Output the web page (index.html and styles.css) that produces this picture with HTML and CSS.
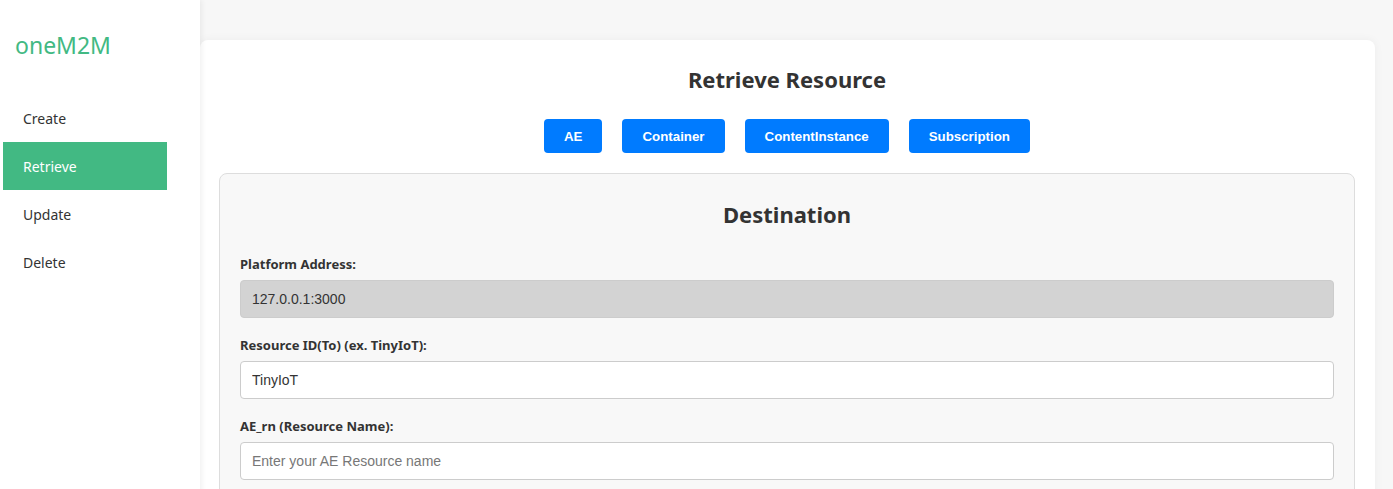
FILE: index.html
```html
<!DOCTYPE html>
<html>
<head>
<meta charset="utf-8">
<link rel="stylesheet" href="styles.css">
</head>
<body>
<div class="app">
  <aside class="sidebar">
    <div class="logo">oneM2M</div>
    <nav class="menu">
      <div class="menu-item">Create</div>
      <div class="menu-item active">Retrieve</div>
      <div class="menu-item">Update</div>
      <div class="menu-item">Delete</div>
    </nav>
  </aside>
  <main class="main">
    <section class="card">
      <h2 class="title">Retrieve Resource</h2>
      <div class="tabs">
        <button class="tab">AE</button>
        <button class="tab">Container</button>
        <button class="tab">ContentInstance</button>
        <button class="tab">Subscription</button>
      </div>
      <div class="form-box">
        <h3 class="form-title">Destination</h3>
        <label class="label">Platform Address:</label>
        <input class="input disabled" type="text" value="127.0.0.1:3000" disabled>
        <label class="label">Resource ID(To) (ex. TinyIoT):</label>
        <input class="input" type="text" value="TinyIoT">
        <label class="label">AE_rn (Resource Name):</label>
        <input class="input" type="text" placeholder="Enter your AE Resource name">
      </div>
    </section>
  </main>
</div>
</body>
</html>
```

FILE: styles.css
```css
* { box-sizing: border-box; }
html, body { margin: 0; padding: 0; }
body {
  font-family: "Noto Sans", "Open Sans", sans-serif;
  background: #f7f7f7;
  color: #2c3e50;
  height: 489px;
  overflow: hidden;
}
.app { display: flex; min-height: 489px; }
.sidebar {
  width: 200px;
  flex-shrink: 0;
  background: #fff;
  box-shadow: 2px 0 5px rgba(0,0,0,0.06);
  padding: 0 33px 0 3px;
  position: relative;
  z-index: 1;
}
.logo {
  color: #42b983;
  font-size: 23px;
  line-height: 30px;
  padding: 30px 0 0 12px;
  height: 94px;
}
.menu { display: flex; flex-direction: column; }
.menu-item {
  height: 48px;
  line-height: 47px;
  padding: 1px 0 0 20px;
  font-size: 14px;
  color: #333;
}
.menu-item.active { background: #42b983; color: #fff; }
.main { flex: 1; padding: 40px 18px 0 0; }
.card {
  background: #fff;
  border-radius: 8px;
  box-shadow: 0 0 10px rgba(0,0,0,0.05);
  padding: 20px 20px 20px 19px;
}
.title {
  margin: 5px 0 0;
  text-align: center;
  font-size: 22px;
  line-height: 29px;
  color: #333;
  font-weight: 700;
}
.tabs {
  display: flex;
  justify-content: center;
  gap: 20px;
  margin-top: 25px;
}
.tab {
  height: 34px;
  padding: 0 20px;
  border: none;
  border-radius: 4px;
  background: #007bff;
  color: #fff;
  font-family: "Liberation Sans", Arial, sans-serif;
  font-weight: 700;
  font-size: 13.3px;
}
.form-box {
  margin-top: 20px;
  background: #f8f8f8;
  border: 1px solid #ddd;
  border-radius: 8px;
  padding: 20px 20px 20px 20px;
}
.form-title {
  margin: 7px 0 29px;
  text-align: center;
  font-size: 22px;
  line-height: 26px;
  color: #333;
  font-weight: 700;
}
.label {
  display: block;
  font-size: 13px;
  line-height: 17px;
  font-weight: 700;
  color: #333;
  margin-bottom: 7px;
}
.input {
  display: block;
  width: 100%;
  height: 38px;
  margin: 0 0 19px;
  padding: 0 11px;
  border: 1px solid #ccc;
  border-radius: 4px;
  background: #fff;
  font-family: "Liberation Sans", Arial, sans-serif;
  font-size: 14px;
  color: #333;
}
.input + .label { margin-top: 0; }
.input::placeholder { color: #777; }
.input.disabled { background: #d3d3d3; color: #333; }
```
